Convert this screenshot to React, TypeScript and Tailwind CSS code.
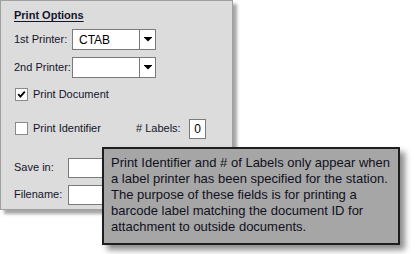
import React from 'react';

const font = { fontFamily: '"Liberation Sans", Arial, sans-serif' };

// Windows-style dropdown box
function Combo({ value }: { value?: string }) {
  return (
    <div className="flex h-[21px] w-[84px] border border-[#7a7a7a] bg-white">
      <div className="flex flex-1 items-center pl-[6px] text-[12px] leading-none text-black">{value}</div>
      <div className="flex w-[16px] items-center justify-center border-l border-[#7a7a7a]">
        <svg width="8" height="5" viewBox="0 0 8 5">
          <rect x="0" y="0" width="8" height="1" fill="#000" />
          <polygon points="0.5,1 7.5,1 4,4.5" fill="#000" />
        </svg>
      </div>
    </div>
  );
}

function Check({ checked }: { checked?: boolean }) {
  return (
    <div className="flex h-[13px] w-[13px] items-center justify-center border border-[#8a8a8a] bg-white">
      {checked && (
        <svg width="9" height="9" viewBox="0 0 9 9">
          <path d="M1.2 4.2 L3.4 6.6 L7.8 1.6" stroke="#000" strokeWidth="1.8" fill="none" />
        </svg>
      )}
    </div>
  );
}

export default function App() {
  return (
    <div className="relative h-[254px] w-[415px] overflow-hidden bg-white text-[11px] text-[#14142a]" style={font}>
      {/* Print options panel */}
      <div className="flex h-[210px] w-[233px] flex-col border border-[#a0a0a0] bg-[#dcdcdc] pl-[13px] pt-[6px] shadow-[4px_4px_3px_rgba(0,0,0,0.35)]">
        <div className="h-[14px] font-bold underline underline-offset-2">Print Options</div>

        <div className="mt-[8px] flex items-center">
          <span className="w-[58px]">1st Printer:</span>
          <Combo value="CTAB" />
        </div>

        <div className="mt-[7px] flex items-center">
          <span className="w-[58px]">2nd Printer:</span>
          <Combo />
        </div>

        <div className="mt-[8px] flex items-center gap-[5px] pl-[1px]">
          <Check checked />
          <span>Print Document</span>
        </div>

        <div className="mt-[16px] flex items-center pl-[1px]">
          <Check />
          <span className="ml-[5px] w-[103px]">Print Identifier</span>
          <span className="w-[53px]"># Labels:</span>
          <div className="flex h-[20px] w-[17px] items-center justify-center border border-[#7a7a7a] bg-white text-[12px] text-black">0</div>
        </div>

        <div className="mt-[19px] flex items-center">
          <span className="w-[54px]">Save in:</span>
          <div className="h-[20px] w-[120px] border border-[#7a7a7a] bg-white" />
        </div>

        <div className="mt-[7px] flex items-center">
          <span className="w-[54px]">Filename:</span>
          <div className="h-[20px] w-[120px] border border-[#7a7a7a] bg-white" />
        </div>
      </div>

      {/* Callout overlay */}
      <div className="absolute left-[102px] top-[147px] w-[298px] border-2 border-[#1e1e1e] bg-[#a6a6a6] px-[7px] pb-[8px] pt-[6px] text-[13px] leading-[16px] text-[#101020] shadow-[5px_5px_6px_rgba(0,0,0,0.45)]">
        Print Identifier and # of Labels only appear when a label printer has been specified for the station. The purpose of these fields is for printing a barcode label matching the document ID for attachment to outside documents.
      </div>
    </div>
  );
}
